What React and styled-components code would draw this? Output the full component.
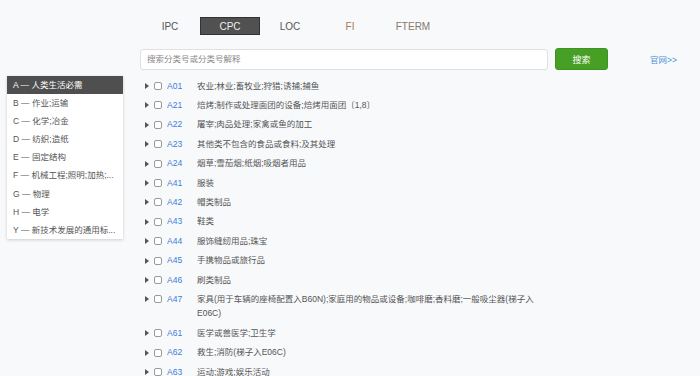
import React from 'react';
import styled, { createGlobalStyle } from 'styled-components';

const GlobalStyle = createGlobalStyle`
    html, body {
        margin:0;
        padding:0;
        background:#f8f9fb;
        font-family:"Liberation Sans", "Noto Sans CJK SC", sans-serif;
        color:#444;
    }
    *{ box-sizing:border-box; }
`

const tabs = [
    { name: 'IPC', color: '#555' },
    { name: 'CPC', color: '#eee', active: true },
    { name: 'LOC', color: '#555' },
    { name: 'FI', color: '#a67c4e' },
    { name: 'FTERM', color: '#84796e' },
];

// labels are shortened the way the page shows them
const sections = [
    'A — 人类生活必需',
    'B — 作业;运输',
    'C — 化学;冶金',
    'D — 纺织;造纸',
    'E — 固定结构',
    'F — 机械工程;照明;加热;...',
    'G — 物理',
    'H — 电学',
    'Y — 新技术发展的通用标...',
];

const classes = [
    ['A01', '农业;林业;畜牧业;狩猎;诱捕;捕鱼'],
    ['A21', '焙烤;制作或处理面团的设备;焙烤用面团〔1,8〕'],
    ['A22', '屠宰;肉品处理;家禽或鱼的加工'],
    ['A23', '其他类不包含的食品或食料;及其处理'],
    ['A24', '烟草;雪茄烟;纸烟;吸烟者用品'],
    ['A41', '服装'],
    ['A42', '帽类制品'],
    ['A43', '鞋类'],
    ['A44', '服饰缝纫用品;珠宝'],
    ['A45', '手携物品或旅行品'],
    ['A46', '刷类制品'],
    ['A47', '家具(用于车辆的座椅配置入B60N);家庭用的物品或设备;咖啡磨;香料磨;一般吸尘器(梯子入E06C)'],
    ['A61', '医学或兽医学;卫生学'],
    ['A62', '救生;消防(梯子入E06C)'],
    ['A63', '运动;游戏;娱乐活动'],
];

function App() {
    return (
        <Page>
            <GlobalStyle />
            <Header>
                <Tabs>
                    {tabs.map(t => (
                        <Tab key={t.name} $active={t.active} $color={t.color}>{t.name}</Tab>
                    ))}
                </Tabs>
                <SearchBar>
                    <SearchInput placeholder="搜索分类号或分类号解释" />
                    <SearchButton>搜索</SearchButton>
                    <SiteLink href="#">官网&gt;&gt;</SiteLink>
                </SearchBar>
            </Header>
            <Body>
                <Sidebar>
                    {sections.map((s, i) => (
                        <SideItem key={s} $active={i === 0}>{s}</SideItem>
                    ))}
                </Sidebar>
                <ClassList>
                    {classes.map(([code, text]) => (
                        <Row key={code}>
                            <Caret width="4" height="6" viewBox="0 0 4 6">
                                <path d="M0 0 L4 3 L0 6 Z" fill="#555" />
                            </Caret>
                            <Check />
                            <Code>{code}</Code>
                            <Desc>{text}</Desc>
                        </Row>
                    ))}
                </ClassList>
            </Body>
        </Page>
    )
}

const Page = styled.div`
    width:700px;
    min-height:376px;
    overflow:hidden;
`
const Header = styled.div`
    padding:17px 0 0 140px;
`
const Tabs = styled.div`
    display:flex;
    height:18px;
`
const Tab = styled.div`
    width:60px;
    height:18px;
    line-height:17px;
    text-align:center;
    font-size:10px;
    color:${p => p.$color};
    background:${p => p.$active ? '#515151' : 'transparent'};
    border:1px solid ${p => p.$active ? '#333' : 'transparent'};
    &:nth-child(5){ margin-left:3px; }
`
const SearchBar = styled.div`
    display:flex;
    align-items:center;
    margin-top:13px;
`
const SearchInput = styled.input`
    width:408px;
    height:21px;
    border:1px solid #e0e0e0;
    border-radius:3px;
    background:#fff;
    padding:0 6px;
    font-size:8.5px;
    font-family:inherit;
    outline:none;
    &::placeholder{ color:#888; }
`
const SearchButton = styled.button`
    margin-left:7px;
    width:53px;
    height:22px;
    border:1px solid #3d9420;
    border-radius:3px;
    background:#47a025;
    color:#fff;
    font-size:9px;
    font-family:inherit;
    padding:0;
`
const SiteLink = styled.a`
    margin-left:42px;
    font-size:8.5px;
    color:#4a90d9;
    text-decoration:none;
`
const Body = styled.div`
    display:flex;
    margin-top:6px;
`
const Sidebar = styled.div`
    margin-left:7px;
    width:116px;
    align-self:flex-start;
    background:#fff;
    box-shadow:0 1px 3px rgba(0,0,0,.18);
`
const SideItem = styled.div`
    height:18.1px;
    line-height:18.1px;
    padding:0 6px;
    font-size:8.5px;
    white-space:nowrap;
    color:${p => p.$active ? '#fff' : '#555'};
    background:${p => p.$active ? '#4f4f4f' : 'transparent'};
`
const ClassList = styled.div`
    margin-left:22px;
    width:420px;
`
const Row = styled.div`
    display:flex;
    align-items:flex-start;
    padding:2.5px 0;
    line-height:14.4px;
    font-size:8.5px;
`
const Caret = styled.svg`
    flex:none;
    margin:4.5px 0 0 0;
`
const Check = styled.span`
    flex:none;
    width:8px;
    height:8px;
    margin:3.5px 0 0 5px;
    border:1px solid #999;
    border-radius:2px;
    background:#fff;
`
const Code = styled.span`
    flex:none;
    width:30px;
    margin-left:5px;
    color:#3b7dd8;
`
const Desc = styled.span`
    color:#555;
    width:340px;
`

export default App;
